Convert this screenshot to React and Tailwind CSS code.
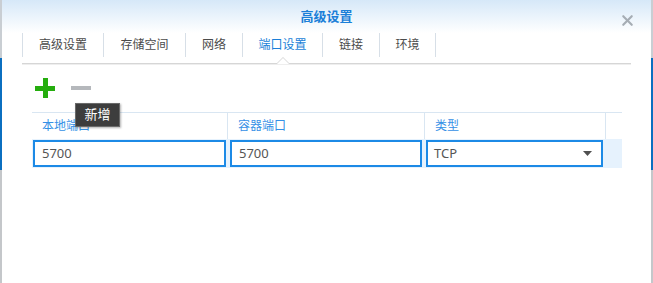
import { X } from 'lucide-react'

const tabs = [
  { label: '高级设置', w: 'w-[81px]' },
  { label: '存储空间', w: 'w-[82px]' },
  { label: '网络', w: 'w-[57px]' },
  { label: '端口设置', w: 'w-[80px]', active: true },
  { label: '链接', w: 'w-[57px]' },
  { label: '环境', w: 'w-[57px]' },
]

function EdgeStrip() {
  return (
    <div className="flex w-[2px] shrink-0 flex-col">
      <div className="h-[58px] bg-[#c9ced3]" />
      <div className="h-[112px] bg-[#0b6fc0]" />
      <div className="flex-1 bg-[#c4c7ca]" />
    </div>
  )
}

export default function App() {
  return (
    <div className="flex h-[283px] w-[653px] overflow-hidden bg-white font-['Noto_Sans','Noto_Sans_CJK_SC',sans-serif]">
      <EdgeStrip />
      <div className="relative flex flex-1 flex-col bg-white">
        <header className="relative flex h-[33px] items-center justify-center bg-gradient-to-b from-[#d6e8f8] to-white">
          <h1 className="pt-[1px] text-[13px] font-semibold text-[#1b7fd8]">高级设置</h1>
          <X aria-hidden="true" className="absolute right-[15px] top-[12px] size-[17px] text-[#a6adb4]" strokeWidth={3} />
        </header>

        <div className="relative mx-[20px] flex border-b border-[#d6d6d6] pb-[6px] shadow-[0_1px_0_#eeeeee]">
          {tabs.map((t, i) => (
            <div
              key={t.label}
              className={`flex h-[24px] items-center justify-center border-l border-[#d7dfe7] text-[12px] ${t.w} ${i === tabs.length - 1 ? 'border-r' : ''} ${t.active ? 'text-[#1b7fd8]' : 'text-[#4b4b4b]'}`}
            >
              {t.label}
            </div>
          ))}
          <div className="absolute bottom-[-1px] left-[254px] h-0 w-0 border-x-[7px] border-b-[7px] border-x-transparent border-b-[#d6d6d6]" />
          <div className="absolute bottom-[-1px] left-[255px] h-0 w-0 border-x-[6px] border-b-[6px] border-x-transparent border-b-white" />
        </div>

        <div className="ml-[33px] mt-[14px] flex h-[20px] items-center gap-[16px]">
          <div className="relative size-[20px]">
            <div className="absolute left-0 top-[8px] h-[5px] w-[20px] bg-[#25ad0e]" />
            <div className="absolute left-[8px] top-0 h-[20px] w-[5px] bg-[#25ad0e]" />
          </div>
          <div className="h-[4px] w-[20px] bg-[#b5b8bc]" />
        </div>

        <div className="ml-[30px] mt-[14px] w-[590px]">
          <div className="grid h-[27px] grid-cols-[196px_197px_181px_16px] border-t border-[#d9e6f2] text-[12px] text-[#3590e6]">
            <div className="flex items-center border-r border-[#d9e6f2] pl-[10px]">本地端口</div>
            <div className="flex items-center border-r border-[#d9e6f2] pl-[10px]">容器端口</div>
            <div className="flex items-center border-r border-[#d9e6f2] pl-[10px]">类型</div>
            <div />
          </div>
          <div className="flex h-[29px] items-center gap-[4px] bg-[#e6f2fd] pl-[1px] text-[13px] text-[#555555]">
            <div className="flex h-[27px] w-[193px] items-center border-2 border-[#1c8ae6] bg-white pl-[7px]">5700</div>
            <div className="flex h-[27px] w-[192px] items-center border-2 border-[#1c8ae6] bg-white pl-[7px]">5700</div>
            <div className="flex h-[27px] w-[177px] items-center justify-between border-2 border-[#1c8ae6] bg-white pl-[6px] pr-[9px]">
              <span>TCP</span>
              <svg width="9" height="5" viewBox="0 0 9 5" aria-hidden="true">
                <path d="M0 0h9L4.5 5z" fill="#505050" />
              </svg>
            </div>
          </div>
        </div>

        <div className="absolute left-[73px] top-[103px] flex h-[24px] w-[45px] items-center justify-center border border-[#6a6a6a] bg-[#3d3d3d] text-[13px] text-white shadow-[1px_1px_2px_rgba(0,0,0,0.3)]">
          新增
        </div>
      </div>
      <EdgeStrip />
    </div>
  )
}
